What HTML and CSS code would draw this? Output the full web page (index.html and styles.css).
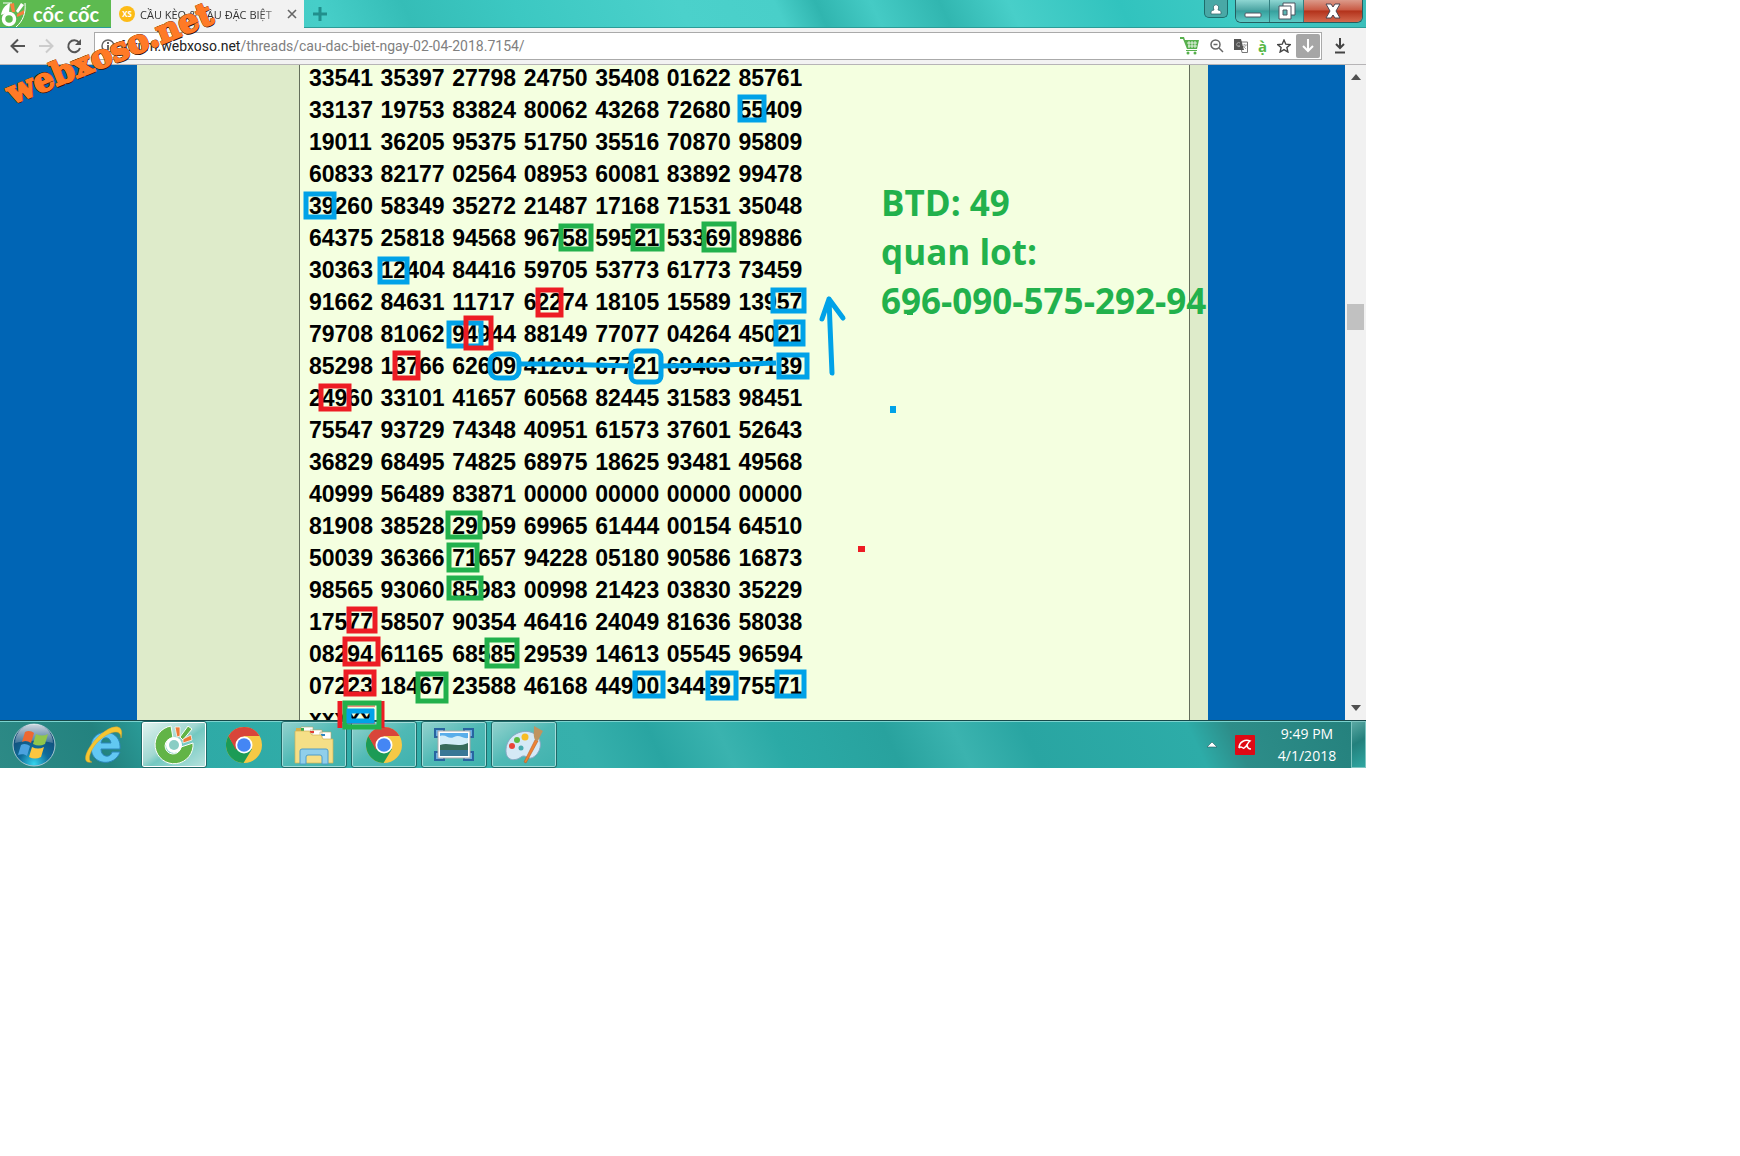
FILE: index.html
```html
<!DOCTYPE html>
<html lang="vi">
<head>
    <meta charset="UTF-8">
    <meta name="viewport" content="width=device-width, initial-scale=1.0">
    <title>CẦU KÈO &amp; CẦU ĐẶC BIỆT</title>
    <link rel="stylesheet" href="styles.css">
</head>
<body>
    <!-- shared icons -->
    <svg width="0" height="0" class="defs" aria-hidden="true">
        <symbol id="chrome" viewBox="0 0 40 40">
            <circle cx="20" cy="20" r="18" fill="#f6c945"/>
            <path d="M4.400 11A18 18 0 0 0 19.500 38L28 24 20 20 12.500 24z" fill="#1c9b56"/>
            <path d="M4.400 11A18 18 0 0 1 35.600 11H20L12 25z" fill="#d8453a"/>
            <circle cx="20" cy="20" r="8.500" fill="#fff"/>
            <circle cx="20" cy="20" r="6.800" fill="#4486f4"/>
        </symbol>
    </svg>

    <div class="desktop">
        <header class="title-bar">
            <div class="brand">
                <svg width="26" height="28" viewBox="0 0 26 28">
                    <path d="M3 3h9M25 3c1 10-2 18-9 24" fill="none" stroke="#fff" stroke-width="1"/>
                    <path d="M1 15C2 9 5 5 10 3L9 12z" fill="#fff"/>
                    <circle cx="9" cy="19" r="5.500" fill="none" stroke="#fff" stroke-width="3.500"/>
                    <path d="m10 4 4-1 1 9-3 0zM17 14l7-4 0 4-7 3z" fill="#f5813f"/>
                    <path d="m16 11 5-8 3 2-6 8z" fill="#fff"/>
                </svg>
                <span>cốc cốc</span>
            </div>
            <div class="tab">
                <span class="tab-icon">XS</span>
                <span class="tab-title">CẦU KÈO &amp; CẦU ĐẶC BIỆT</span>
                <button class="tab-close" aria-label="Close tab">
                    <svg width="10" height="10" viewBox="0 0 10 10"><path d="m1 1 8 8M9 1 1 9" stroke="#666" stroke-width="1.600"/></svg>
                </button>
            </div>
            <button class="new-tab" aria-label="New tab">
                <svg width="14" height="14" viewBox="0 0 14 14"><path d="M7 0v14M0 7h14" stroke="#218f8c" stroke-width="3"/></svg>
            </button>
            <div class="window-controls">
                <button class="user" aria-label="User">
                    <svg width="12" height="12" viewBox="0 0 12 12"><path d="M1 11V9q0-2 3-2Q3 5 3.500 3 6 0 8.500 3 9 5 8 7q3 0 3 2v2z" fill="#fff" stroke="#356b70" stroke-width=".8"/></svg>
                </button>
                <div class="window-buttons">
                    <button aria-label="Minimize">
                        <svg width="18" height="18" viewBox="0 0 18 18"><rect x="1" y="11" width="16" height="4" rx="1" fill="#fff" stroke="#4c5560"/></svg>
                    </button>
                    <button aria-label="Restore">
                        <svg width="20" height="18" viewBox="0 0 20 18"><path d="M6 1h12v12H6z" fill="#fff" stroke="#4c5560"/><path d="M2 4h12v13H2z" fill="#fff" stroke="#4c5560"/><path d="M6 8h4v5H6z" fill="#58b5b3" stroke="#4c5560"/></svg>
                    </button>
                    <button class="close" aria-label="Close">
                        <svg width="18" height="16" viewBox="0 0 18 16"><path d="M2 1h5l2 3 2-3h5l-4 7 4 7h-5l-2-3-2 3H2l4-7z" fill="#fff" stroke="#4c4550"/></svg>
                    </button>
                </div>
            </div>
        </header>

        <nav class="toolbar">
            <button aria-label="Back"><svg width="16" height="16" viewBox="0 0 16 16"><path d="M15 8H2M8 1.500 1.500 8 8 14.500" fill="none" stroke="#555" stroke-width="2"/></svg></button>
            <button aria-label="Forward"><svg width="16" height="16" viewBox="0 0 16 16"><path d="M1 8h13M8 1.500 14.500 8 8 14.500" fill="none" stroke="#ccc" stroke-width="2"/></svg></button>
            <button aria-label="Reload"><svg width="16" height="16" viewBox="0 0 16 16"><path d="M13 4.500A6 6 0 1 0 14 10" fill="none" stroke="#555" stroke-width="2"/><path d="M15 1v6H9z" fill="#555"/></svg></button>
            <div class="address">
                <svg width="14" height="14" viewBox="0 0 14 14"><circle cx="7" cy="7" r="6" fill="none" stroke="#666" stroke-width="1.500"/><path d="M7 3v2M7 6v5" stroke="#666" stroke-width="2"/></svg>
                <a class="url" href="#"><b>forum.webxoso.net</b>/threads/cau-dac-biet-ngay-02-04-2018.7154/</a>
                <div class="address-icons">
                    <svg width="20" height="18" viewBox="0 0 20 18"><path d="M0 0h4l1 3h14l-2 9H7L3 2H0z" fill="#57b04d"/><path d="M7 6h10M8 9h9M9 4v7M12 4v7M15 4v7" stroke="#fff" stroke-width=".8"/><path d="M6 13h11v1H6z" fill="#57b04d"/><circle cx="8" cy="16" r="1.500" fill="#57b04d"/><circle cx="15" cy="16" r="1.500" fill="#57b04d"/></svg>
                    <svg width="14" height="14" viewBox="0 0 14 14"><circle cx="5.500" cy="5.500" r="4.500" fill="none" stroke="#666" stroke-width="1.500"/><path d="M3.500 5.500h4M9 9l4 4" stroke="#666" stroke-width="1.500"/></svg>
                    <svg width="14" height="14" viewBox="0 0 14 14"><path d="M6 3h7.500v10.500H8z" fill="#fff" stroke="#777"/><path d="M0 0h7l3 11H0z" fill="#555"/><path d="M6 4a2 2 0 1 0 0 3H4M8 6h5M10.500 5v1M12 6l-3 4M9 7l3 3" fill="none" stroke="#aaa"/></svg>
                    <span class="accent">ạ̀</span>
                    <svg width="14" height="14" viewBox="0 0 14 14"><path d="m7 1 1.800 4.200 4.500.4-3.400 3 1 4.400L7 10.600 3.100 13l1-4.400-3.400-3 4.500-.4z" fill="none" stroke="#444" stroke-width="1.400"/></svg>
                </div>
                <button class="save" aria-label="Save"><svg width="12" height="14" viewBox="0 0 12 14"><path d="M6 0v12M1 7l5 5 5-5" fill="none" stroke="#fff" stroke-width="2"/></svg></button>
            </div>
            <button class="downloads" aria-label="Downloads"><svg width="12" height="16" viewBox="0 0 12 16"><path d="M6 0v10M2 6l4 4 4-4" fill="none" stroke="#444" stroke-width="2"/><path d="M1 14.500h10" stroke="#444" stroke-width="2"/></svg></button>
        </nav>

        <div class="viewport">
            <main class="site">
                <div class="thread">
                    <article class="post">
                        <table class="numbers">
                            <tr><td>33541</td><td>35397</td><td>27798</td><td>24750</td><td>35408</td><td>01622</td><td>85761</td></tr>
                            <tr><td>33137</td><td>19753</td><td>83824</td><td>80062</td><td>43268</td><td>72680</td><td>55409</td></tr>
                            <tr><td>19011</td><td>36205</td><td>95375</td><td>51750</td><td>35516</td><td>70870</td><td>95809</td></tr>
                            <tr><td>60833</td><td>82177</td><td>02564</td><td>08953</td><td>60081</td><td>83892</td><td>99478</td></tr>
                            <tr><td>39260</td><td>58349</td><td>35272</td><td>21487</td><td>17168</td><td>71531</td><td>35048</td></tr>
                            <tr><td>64375</td><td>25818</td><td>94568</td><td>96758</td><td>59521</td><td>53369</td><td>89886</td></tr>
                            <tr><td>30363</td><td>12404</td><td>84416</td><td>59705</td><td>53773</td><td>61773</td><td>73459</td></tr>
                            <tr><td>91662</td><td>84631</td><td>11717</td><td>62274</td><td>18105</td><td>15589</td><td>13957</td></tr>
                            <tr><td>79708</td><td>81062</td><td>94944</td><td>88149</td><td>77077</td><td>04264</td><td>45021</td></tr>
                            <tr><td>85298</td><td>13766</td><td>62609</td><td>41201</td><td>67721</td><td>69463</td><td>87139</td></tr>
                            <tr><td>24960</td><td>33101</td><td>41657</td><td>60568</td><td>82445</td><td>31583</td><td>98451</td></tr>
                            <tr><td>75547</td><td>93729</td><td>74348</td><td>40951</td><td>61573</td><td>37601</td><td>52643</td></tr>
                            <tr><td>36829</td><td>68495</td><td>74825</td><td>68975</td><td>18625</td><td>93481</td><td>49568</td></tr>
                            <tr><td>40999</td><td>56489</td><td>83871</td><td>00000</td><td>00000</td><td>00000</td><td>00000</td></tr>
                            <tr><td>81908</td><td>38528</td><td>29059</td><td>69965</td><td>61444</td><td>00154</td><td>64510</td></tr>
                            <tr><td>50039</td><td>36366</td><td>71657</td><td>94228</td><td>05180</td><td>90586</td><td>16873</td></tr>
                            <tr><td>98565</td><td>93060</td><td>85983</td><td>00998</td><td>21423</td><td>03830</td><td>35229</td></tr>
                            <tr><td>17577</td><td>58507</td><td>90354</td><td>46416</td><td>24049</td><td>81636</td><td>58038</td></tr>
                            <tr><td>08294</td><td>61165</td><td>68585</td><td>29539</td><td>14613</td><td>05545</td><td>96594</td></tr>
                            <tr><td>07223</td><td>18467</td><td>23588</td><td>46168</td><td>44900</td><td>34439</td><td>75571</td></tr>
                            <tr><td>xxxxx</td></tr>
                        </table>
                    </article>
                </div>
            </main>
            <div class="scrollbar">
                <svg width="10" height="6" viewBox="0 0 10 6"><path d="M0 6 5 0l5 6z" fill="#505050"/></svg>
                <div class="thumb"></div>
                <svg width="10" height="6" viewBox="0 0 10 6"><path d="m0 0 5 6 5-6z" fill="#505050"/></svg>
            </div>
        </div>

        <footer class="taskbar">
            <button class="start" aria-label="Start">
                <svg width="46" height="46" viewBox="0 0 46 46">
                    <defs>
                        <radialGradient id="orb" cx=".5" cy=".95" r=".9"><stop offset="0" stop-color="#35d5ee"/><stop offset=".4" stop-color="#0f6c9a"/><stop offset="1" stop-color="#12406c"/></radialGradient>
                        <linearGradient id="shine" x2="0" y2="1"><stop offset="0" stop-color="#fff" stop-opacity=".8"/><stop offset="1" stop-color="#fff" stop-opacity=".2"/></linearGradient>
                    </defs>
                    <circle cx="23" cy="23" r="21" fill="url(#orb)" stroke="#a4c5cf"/>
                    <path d="M4 21a19 19 0 0 1 38 0c-12-3-26-3-38 0z" fill="url(#shine)"/>
                    <path d="M14 10c3-2 7-1 9 1l-3 10c-3-2-6-3-9-1z" fill="#ee6832"/>
                    <path d="M25 12c4 2 8 2 12 0l-3 10c-4 2-8 2-12 0z" fill="#91c64c"/>
                    <path d="M10 23c3-2 6-1 9 1l-3 10c-2-2-6-2-9-1z" fill="#4ba2df"/>
                    <path d="M21 25c4 2 8 2 12 0l-3 10c-4 2-8 2-12 0z" fill="#fbc640"/>
                </svg>
            </button>
            <button aria-label="Internet Explorer">
                <svg width="40" height="40" viewBox="0 0 40 40">
                    <path d="M36 24H17c0 9 10 9 11 3h8C31 42 7 41 7 22 7 2 38 2 36 24zM17 18h10c-1-7-9-7-10 0z" fill="#62c8f2" stroke="#2c87bc"/>
                    <path d="M8 37C-4 40 2 23 15 11S41-2 37 13C37 4 27 6 17 14S2 36 8 37z" fill="#f6c631" stroke="#dca52b" stroke-width=".5"/>
                </svg>
            </button>
            <button class="open active" aria-label="Cốc Cốc">
                <svg width="40" height="40" viewBox="0 0 40 40">
                    <path d="M17 1A19 19 0 1 0 39 18l-12 4a8 8 0 1 1-8-9z" fill="#62b447" stroke="#fff"/>
                    <path d="m26 12 8-11 4 3-9 11z" fill="#62b447" stroke="#fff"/>
                    <circle cx="20" cy="20" r="8" fill="#fff"/><circle cx="20" cy="20" r="5" fill="#8acdc4"/>
                    <path d="m21 2 5 0 0 9-3 1zM29 14l8-4 1 5-9 3z" fill="#ee7937" stroke="#fff" stroke-width=".7"/>
                </svg>
            </button>
            <button aria-label="Chrome"><svg width="40" height="40"><use href="#chrome"/></svg></button>
            <button class="open" aria-label="Explorer">
                <svg width="40" height="40" viewBox="0 0 40 40">
                    <path d="M2 3h13v5h22v29H2z" fill="#d4b04c"/>
                    <path d="M7 2h12v7H7zM16 5h12v7H16zM26 7h11v8H26z" fill="#fff" stroke="#b7a465" stroke-width=".6"/>
                    <path d="M7 3h3v3H7z" fill="#38a94d"/><path d="M16 6h4v2h-4z" fill="#e23c33"/><path d="M27 9h4v2h-4z" fill="#2c86c5"/>
                    <path d="M1 6h14l3 4h9l2 4h10v24H1z" fill="#f5df87" stroke="#d0b256" stroke-width=".7"/>
                    <path d="M6 39V26q0-2 2-2h24q2 0 2 2v13h-6v-7q0-2-2-2H14q-2 0-2 2v7z" fill="#90cfeb" stroke="#4f9cc8"/>
                </svg>
            </button>
            <button class="open" aria-label="Chrome window"><svg width="40" height="40"><use href="#chrome"/></svg></button>
            <button class="open" aria-label="Picture viewer">
                <svg width="40" height="36" viewBox="0 0 40 36">
                    <path d="M1 2h9v8H1zM30 2h9v8h-9zM1 25h9v8H1zM30 25h9v8h-9z" fill="#69ace4" stroke="#2864a0" stroke-width="2"/>
                    <path d="M4 4h32v27H4z" fill="#fff" stroke="#aaa"/>
                    <path d="M6 6h28v23H6z" fill="#5aaeea"/>
                    <path d="M6 9c7-2 8 4 14 1s8 2 14 1v7H6z" fill="#d2edf8"/>
                    <path d="M6 18c9-3 17 3 28-2v7H6z" fill="#376b5b"/><path d="M6 23h28v6H6z" fill="#397796"/>
                </svg>
            </button>
            <button class="open" aria-label="Paint">
                <svg width="40" height="40" viewBox="0 0 40 40">
                    <path d="M2 24C3 10 19 3 29 8s9 17 2 23-9-3-14 1S1 37 2 24z" fill="#d5e9f6" stroke="#88a9c5"/>
                    <circle cx="8" cy="21" r="3" fill="#e94537"/><circle cx="13" cy="15" r="3" fill="#5cbb43"/><circle cx="21" cy="12" r="3.500" fill="#f7bd25"/><circle cx="17" cy="23" r="2.500" fill="#48aaae"/>
                    <path d="m31 15 3 1-12 22-2-1z" fill="#ee8334" stroke="#bb5f26" stroke-width=".6"/>
                    <path d="M31 15c-2-5-1-8-1-14l9 5c-2 4-4 7-5 10z" fill="#bf9460"/>
                </svg>
            </button>
            <div class="tray">
                <svg width="12" height="8" viewBox="0 0 12 8"><path d="m1 6 5-5 5 5z" fill="#fff" stroke="#245c63" stroke-width=".6"/></svg>
                <span class="antivirus">
                    <svg width="14" height="12" viewBox="0 0 14 12"><path d="M1 9C1 3 7 0 12 2 9 4 9 8 6 9 4 10 4 6 1 9M9 5c0 3 1 5 4 5" fill="none" stroke="#fff" stroke-width="1.500"/></svg>
                </span>
                <time class="clock">9:49 PM<br>4/1/2018</time>
            </div>
            <button class="show-desktop" aria-label="Show desktop"></button>
        </footer>

        <!-- pen marks drawn over the numbers -->
        <svg class="marks" width="1366" height="768" viewBox="0 0 1366 768">
            <g class="blue">
                <rect x="740" y="97" width="24" height="23"/>
                <rect x="306" y="194" width="28" height="23"/>
                <rect x="380" y="259" width="27" height="23"/>
                <rect x="773" y="290" width="31" height="21"/>
                <rect x="449" y="323" width="32" height="23"/>
                <rect x="776" y="322" width="27" height="22"/>
                <rect x="490" y="354" width="29" height="24" rx="8"/>
                <rect x="631" y="351" width="30" height="31" rx="6"/>
                <rect x="779" y="355" width="28" height="22"/>
                <rect x="635" y="673" width="28" height="23"/>
                <rect x="708" y="673" width="28" height="25"/>
                <rect x="777" y="672" width="27" height="24"/>
                <path d="M521 364h29l85 2M662 366l60-1 54-2"/>
                <path class="thin" d="m832 373-2-48-1-26M822 319l7-20 14 19"/>
            </g>
            <g class="red">
                <rect x="538" y="290" width="23" height="25"/>
                <rect x="466" y="318" width="25" height="30"/>
                <rect x="395" y="353" width="23" height="25"/>
                <rect x="321" y="386" width="28" height="23"/>
                <rect x="349" y="609" width="26" height="22"/>
                <rect x="345" y="639" width="33" height="25"/>
                <rect x="346" y="672" width="28" height="22"/>
                <path d="M340 701v27M382 701v27"/>
                <path class="hair" d="M347 706h28M347 723h28"/>
            </g>
            <g class="green">
                <rect x="561" y="226" width="30" height="23"/>
                <rect x="633" y="226" width="29" height="23"/>
                <rect x="704" y="224" width="30" height="26"/>
                <rect x="448" y="513" width="32" height="24"/>
                <rect x="449" y="545" width="28" height="25"/>
                <rect x="449" y="578" width="32" height="20"/>
                <rect x="487" y="640" width="30" height="26"/>
                <rect x="418" y="674" width="28" height="27"/>
                <rect x="345" y="703" width="34" height="24"/>
            </g>
            <path class="blue" d="M347 711h27M349 709v14M372 709v14M347 721h27"/>
            <path d="M890 406h6v7h-6z" fill="#00a2e8"/>
            <path d="M858 546h7v6h-7z" fill="#ed1c24"/>
            <path d="M907 312h6v3h-6z" fill="#22b14c"/>
        </svg>
        <p class="note">BTD: 49<br>quan lot:<br>696-090-575-292-94</p>
        <div class="watermark">webxoso.net</div>
    </div>
</body>
</html>
```
FILE: styles.css
```css
* {
    box-sizing: border-box;
}
body {
    margin: 0;
    background: #fff;
    font-family: "Open Sans", "Noto Sans", sans-serif;
}
button {
    border: none;
    padding: 0;
    background: none;
    display: flex;
    align-items: center;
    justify-content: center;
}
svg {
    display: block;
    flex: none;
}
.defs {
    position: absolute;
}
.desktop {
    position: relative;
    max-width: 1366px;
    overflow: hidden;
}

/* title bar */
.title-bar {
    display: flex;
    height: 28px;
    background: linear-gradient(65deg, #3cc3bd 0%, #46cec8 24%, #35bdb7 30%, #3cc8c2 38%, #4bd1cb 50%, #49cfc9 57%, #30b5af 60%, #45cbc5 64%, #31b6b0 69%, #48cfc9 74%, #31c3be 82%, #3ecac4 90%, #3bbdb9 100%);
    border-bottom: 1px solid #2b9c98;
}
.brand {
    display: flex;
    align-items: center;
    gap: 7px;
    width: 111px;
    background: #5dba50;
    color: #fff;
    font: bold 20px/26px Lato, sans-serif;
    white-space: nowrap;
}
.tab {
    display: flex;
    align-items: center;
    width: 193px;
    height: 28px;
    padding: 0 7px 0 8px;
    background: #f2f2f2;
}
.tab-icon {
    width: 16px;
    height: 16px;
    border-radius: 50%;
    background: #fdbb16;
    color: #fff;
    font-size: 8px;
    font-weight: bold;
    line-height: 16px;
    text-align: center;
}
.tab-title {
    flex: 1;
    margin: 0 7px 0 5px;
    white-space: nowrap;
    font-size: 11px;
    color: #333;
    mask-image: linear-gradient(90deg, #000 85%, rgba(0, 0, 0, 0.3));
}
.new-tab {
    width: 32px;
}
.window-controls {
    display: flex;
    align-items: flex-start;
    gap: 7px;
    margin-left: auto;
    padding-right: 3px;
}
.user {
    width: 24px;
    height: 18px;
    border: 1px solid #1e6d6c;
    border-top: none;
    border-radius: 0 0 5px 5px;
    background: #49a8a6;
}
.window-buttons {
    display: flex;
    height: 23px;
    overflow: hidden;
    border: 1px solid #265e60;
    border-top: none;
    border-radius: 0 0 6px 6px;
}
.window-buttons button {
    width: 34px;
    background: linear-gradient(#8ed6d2, #4da6a4 45%, #36a09d 50%, #5ecbc6);
    border-right: 1px solid #347f80;
}
.window-buttons .close {
    width: 58px;
    background: linear-gradient(#dc9a8a, #c95b45 45%, #b3321b 50%, #d3694e);
    border: none;
}

/* toolbar */
.toolbar {
    display: flex;
    align-items: center;
    gap: 12px;
    height: 37px;
    padding: 0 20px 0 10px;
    background: #f2f2f2;
    border-bottom: 1px solid #b6b4b6;
}
.address {
    flex: 1;
    display: flex;
    align-items: center;
    gap: 5px;
    height: 28px;
    padding: 0 1px 0 6px;
    border: 1px solid #aaa;
    background: #fff;
}
.url {
    color: #808080;
    font-family: Roboto, sans-serif;
    font-size: 14px;
    text-decoration: none;
}
.url b {
    color: #222;
    font-weight: normal;
}
.address-icons {
    display: flex;
    align-items: center;
    gap: 10px;
    margin-left: auto;
}
.accent {
    color: #57b847;
    font-size: 15px;
    font-weight: bold;
    line-height: 20px;
}
.save {
    width: 24px;
    height: 24px;
    border-radius: 2px;
    background: #a6a6a6;
}

/* page */
.viewport {
    display: flex;
    height: 655px;
    overflow: hidden;
}
.site {
    flex: 1;
    padding: 0 137px;
    background: #0065b5;
}
.thread {
    padding: 0 18px 0 162px;
    background: #deebca;
}
.post {
    padding: 0 9px;
    border: solid #646e5c;
    border-width: 0 1px;
    background: #f4ffe0;
}
.numbers {
    width: 501px;
    margin-top: -3px;
    table-layout: fixed;
    border-collapse: collapse;
    color: #000;
    font: bold 23px/32px "Liberation Sans", Arial, sans-serif;
}
.numbers td {
    padding: 0;
}
.scrollbar {
    display: flex;
    flex-direction: column;
    align-items: center;
    justify-content: space-between;
    width: 21px;
    padding: 9px 0;
    background: #f1f1f1;
}
.thumb {
    width: 17px;
    height: 26px;
    margin-bottom: 152px;
    background: #c1c1c1;
}

/* taskbar */
.taskbar {
    display: flex;
    gap: 4px;
    height: 48px;
    border-top: 1px solid #17494a;
    box-shadow: inset 0 1px #7cd3cf;
    background: linear-gradient(65deg, #2d8a86 0%, #23827f 8%, #2eaaa6 14%, #36b0ac 43%, #29a5a2 48%, #3ab3af 53%, #2baaa6 57%, #28a29e 65%, #3bb3af 70%, #29a5a2 75%, #2daca8 87%, #2d8d89 90%, #24807c 100%);
}
.taskbar button {
    width: 66px;
    border-radius: 3px;
}
.taskbar .start {
    width: 67px;
}
.taskbar .open {
    border: 1px solid #1f6a69;
    box-shadow: inset 0 0 0 1px #a2dcd9;
    background: linear-gradient(145deg, #94d2ce, #4fb9b5 50%, #40b2ae);
}
.taskbar .active {
    box-shadow: inset 0 0 0 1px #fff;
    background: linear-gradient(145deg, #e2f4f0, #a2d8d2 45%, #74c8c1 55%, #b8e3de);
}
.tray {
    display: flex;
    align-items: center;
    gap: 17px;
    margin-left: auto;
}
.antivirus {
    display: flex;
    align-items: center;
    justify-content: center;
    width: 20px;
    height: 20px;
    border-radius: 1px;
    background: #df0914;
}
.clock {
    width: 70px;
    color: #fff;
    font-size: 14px;
    line-height: 22px;
    text-align: center;
}
.taskbar .show-desktop {
    width: 15px;
    margin-left: 5px;
    border: 1px solid #7fc5c1;
    border-radius: 0;
    background: linear-gradient(150deg, #5aa8a3, #23807c 45%, #2fa6a1);
}

/* drawn on top */
.marks {
    position: absolute;
    top: 0;
    left: 0;
    fill: none;
    stroke-width: 5;
    pointer-events: none;
}
.blue {
    stroke: #00a2e8;
}
.red {
    stroke: #ed1c24;
}
.green {
    stroke: #22b14c;
}
.thin {
    stroke-linecap: round;
    stroke-linejoin: round;
}
.hair {
    stroke-width: 1;
}
.note {
    position: absolute;
    top: 178px;
    left: 881px;
    margin: 0;
    color: #22b14c;
    font: bold 35px/49px "Open Sans", sans-serif;
    white-space: nowrap;
}
.watermark {
    position: absolute;
    top: 33px;
    left: 0;
    color: #ff7a26;
    font: bold 32px/40px "DejaVu Serif", serif;
    -webkit-text-stroke: 2px #ff7a26;
    text-shadow: 1px 1px #2b1408, -1px -1px #2b1408, 1px -1px #2b1408, -1px 1px #2b1408, 0 2px #2b1408;
    transform: rotate(-22deg);
}
```
